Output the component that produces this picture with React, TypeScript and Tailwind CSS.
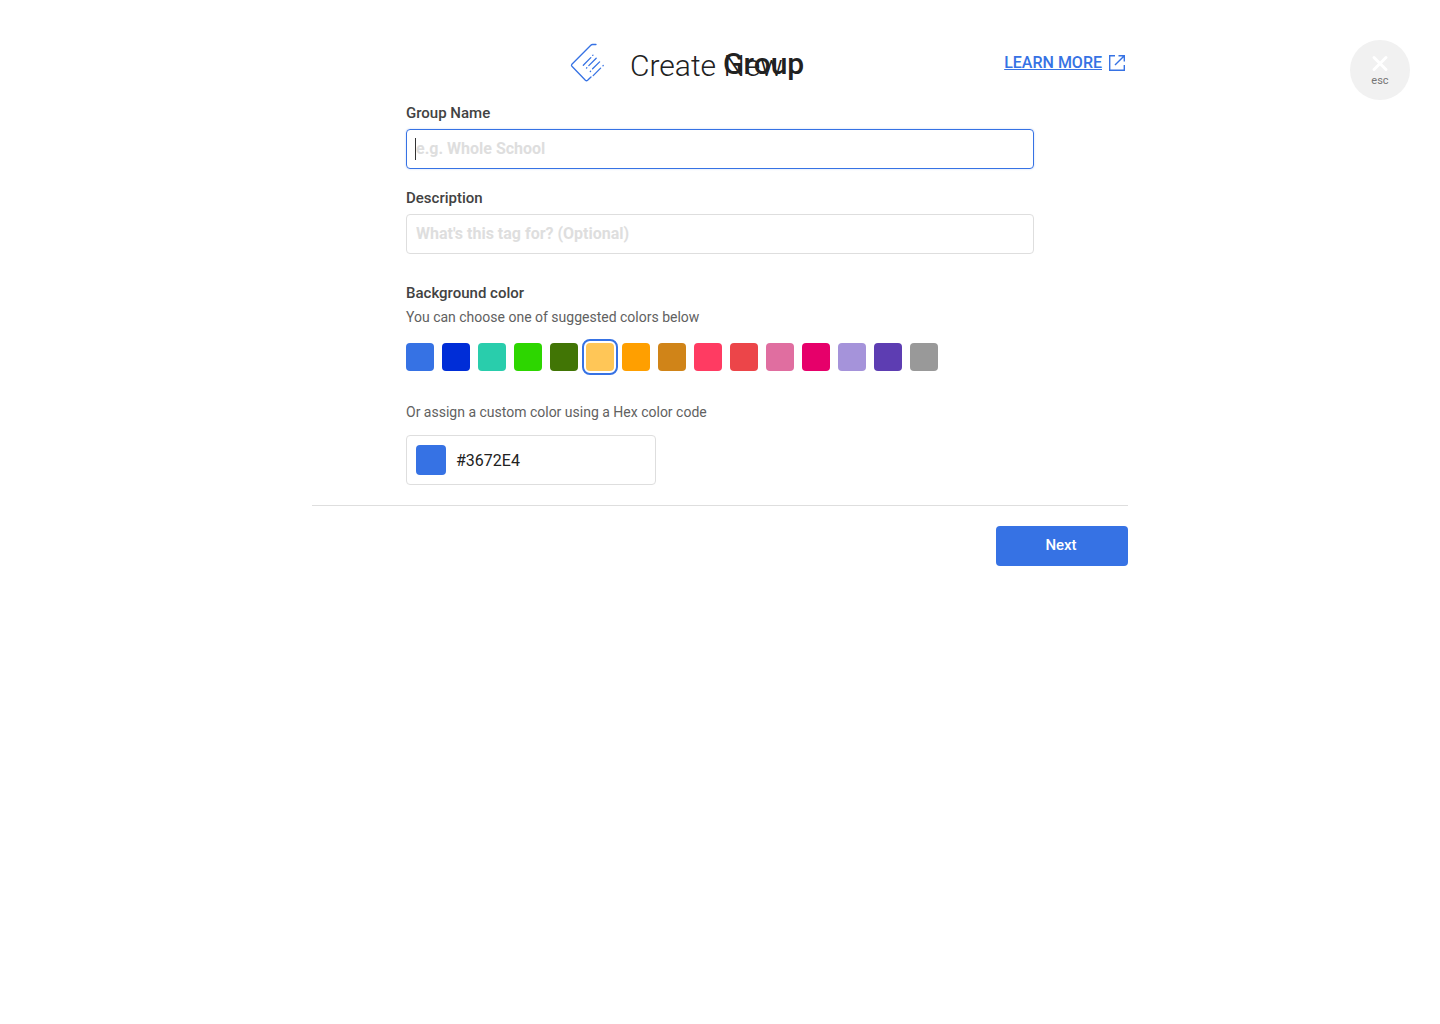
import { useState } from "react";

const swatches = [
  { name: "Blue", value: "#3672E4" },
  { name: "Dark blue", value: "#002DD7" },
  { name: "Teal", value: "#29CDAC" },
  { name: "Green", value: "#2DD600" },
  { name: "Dark green", value: "#417505" },
  { name: "Yellow", value: "#FFC657" },
  { name: "Orange", value: "#FF9F00" },
  { name: "Brown", value: "#D08418" },
  { name: "Coral", value: "#FF3B62" },
  { name: "Red", value: "#EC4549" },
  { name: "Pink", value: "#E06EA0" },
  { name: "Magenta", value: "#E6006A" },
  { name: "Lavender", value: "#A593DA" },
  { name: "Purple", value: "#5D3DB2" },
  { name: "Gray", value: "#999999" },
];

function TagIcon() {
  return (
    <svg
      width="36"
      height="40"
      viewBox="0 0 36 40"
      fill="none"
      stroke="#3672E4"
      strokeWidth="1.3"
      strokeLinecap="round"
      strokeLinejoin="round"
      aria-hidden="true"
    >
      <path d="M26 1.5H22.5Q21.5 1.5 20.8 2.2L1.9 21.3Q1 22.3 1.9 23.3L15.4 37.3Q16.5 38.3 17.6 37.3L21 34" />
      <path d="M13.3 22.3L20.8 14.6M22.7 12.4L23 12.1" />
      <path d="M16.5 25.1L16.8 24.8M18.8 22.6L26.2 15.2" />
      <path d="M20.3 28.5L20.6 28.2M22.6 25.8L29.6 18.9" />
      <path d="M23.2 32.6L30.6 25.1M33 22.7L33.2 22.5" />
    </svg>
  );
}

function ExternalIcon() {
  return (
    <svg
      width="18"
      height="18"
      viewBox="0 0 18 18"
      fill="none"
      stroke="#3672E4"
      strokeWidth="1.4"
      aria-hidden="true"
    >
      <path d="M7 1.7H1.7V16.3H16.3V11M10.5 1.7H16.3V7.5M16.3 1.7L7 11" />
    </svg>
  );
}

export default function App() {
  const [selected, setSelected] = useState("#FFC657");
  const [hex, setHex] = useState("#3672E4");
  const [name, setName] = useState("");

  return (
    <div className="relative min-h-screen bg-white font-[Roboto,sans-serif] text-[#212121] antialiased">
      <button
        type="button"
        aria-label="Close"
        className="absolute top-10 right-[30px] flex size-[60px] flex-col items-center rounded-full bg-[#f1f1f1] pt-[15px] text-[11px] leading-4 text-[#757575]"
      >
        <svg width="18" height="18" viewBox="0 0 18 18" stroke="#fff" strokeWidth="3" strokeLinecap="round" aria-hidden="true">
          <path d="M3 2.5L15 14.5M15 2.5L3 14.5" />
        </svg>
        esc
      </button>

      <main className="mx-auto w-full max-w-[816px] pt-[43px]">
        <header className="flex h-10 items-start pl-[258px]">
          <TagIcon />
          <h1 className="relative ml-6 text-[30px] leading-[46px] font-light whitespace-nowrap">
            Create New
            <span className="absolute top-0 left-[93px] leading-[42px] font-medium">Group</span>
          </h1>
          <a href="#learn" className="mt-[10px] mr-[2px] ml-auto flex items-center gap-[6px] text-base leading-5 font-medium text-[#3672E4]">
            <span className="underline">LEARN MORE</span>
            <ExternalIcon />
          </a>
        </header>

        <form onSubmit={(e) => e.preventDefault()}>
          <div className="px-[94px] pb-5">
            <label htmlFor="group-name" className="mt-5 block text-[15px] leading-5 font-medium text-[#424242]">
              Group Name
            </label>
            <div className="relative mt-[6px]">
              <input
                id="group-name"
                value={name}
                onChange={(e) => setName(e.target.value)}
                placeholder="e.g. Whole School"
                className="block h-10 w-full rounded-[4px] border border-[#3672E4] px-[9px] pb-[2px] text-base font-bold shadow-[0_0_2px_#3672E44d] outline-none placeholder:text-[#dedede]"
              />
              {name === "" && <span className="pointer-events-none absolute top-[9px] left-[9px] h-[22px] w-px bg-[#333]" />}
            </div>

            <label htmlFor="description" className="mt-[19px] block text-[15px] leading-5 font-medium text-[#424242]">
              Description
            </label>
            <input
              id="description"
              placeholder="What's this tag for? (Optional)"
              className="mt-[6px] block h-10 w-full rounded-[4px] border border-[#dedede] px-[9px] pb-[2px] text-base font-bold outline-none placeholder:text-[#dedede]"
            />

            <fieldset>
              <legend className="pt-[29px] text-[15px] leading-5 font-medium text-[#424242]">Background color</legend>
              <p className="mt-1 text-sm leading-5 text-[#616161]">You can choose one of suggested colors below</p>
              <div className="mt-4 flex flex-wrap gap-2">
                {swatches.map((s) => (
                  <input
                    key={s.value}
                    type="radio"
                    name="background"
                    aria-label={s.name}
                    checked={selected === s.value}
                    onChange={() => setSelected(s.value)}
                    className="size-7 appearance-none rounded-[4px] outline-offset-2 outline-[#3672E4] checked:outline-2"
                    style={{ backgroundColor: s.value }}
                  />
                ))}
              </div>
            </fieldset>

            <label htmlFor="hex" className="mt-[31px] block text-sm leading-5 text-[#616161]">
              Or assign a custom color using a Hex color code
            </label>
            <div className="mt-[13px] flex h-[50px] w-[250px] items-center gap-[10px] rounded-[4px] border border-[#dedede] px-[9px]">
              <span className="size-[30px] shrink-0 rounded-[4px]" style={{ backgroundColor: hex }} />
              <input
                id="hex"
                value={hex}
                onChange={(e) => setHex(e.target.value)}
                className="w-full min-w-0 pt-[2px] text-base text-[#212121] outline-none"
              />
            </div>
          </div>
          <div className="flex justify-end border-t border-[#dedede] pt-5">
            <button type="submit" className="h-10 w-[132px] rounded-[4px] bg-[#3672E4] pr-[2px] pb-[2px] text-[15px] font-medium text-white">
              Next
            </button>
          </div>
        </form>
      </main>
    </div>
  );
}
